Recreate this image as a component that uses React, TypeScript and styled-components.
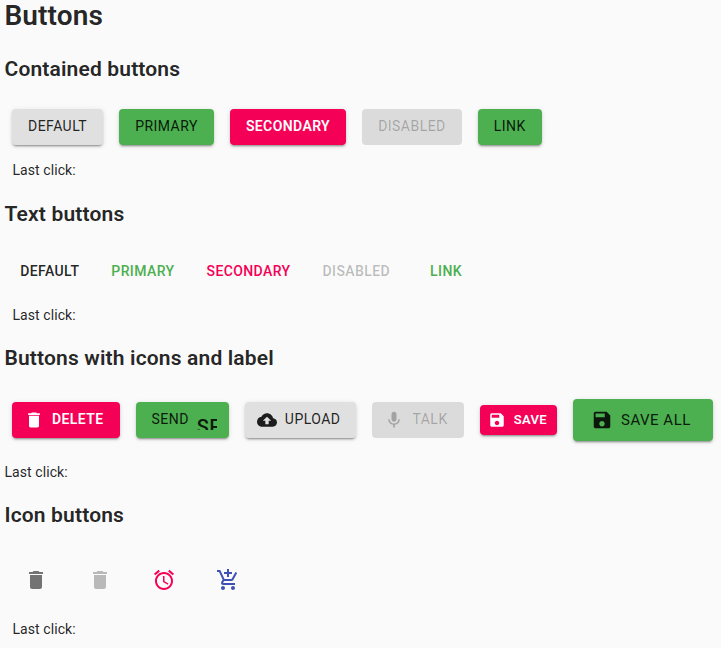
import React from "react";
import styled, { createGlobalStyle, css } from "styled-components";

const GlobalStyle = createGlobalStyle`
  *, *::before, *::after { box-sizing: border-box; }
  body {
    margin: 0;
    background: #fafafa;
    color: rgba(0, 0, 0, 0.87);
    font-family: Roboto, "Liberation Sans", sans-serif;
    font-size: 14px;
  }
`;

type Tone = "default" | "primary" | "secondary" | "disabled";
type Size = "small" | "medium" | "large";

const Page = styled.main`
  display: flex;
  flex-direction: column;
  height: 648px;
  padding-left: 4px;
  overflow: hidden;
`;

const Title = styled.h1`
  margin: 0;
  height: 54px;
  padding-left: 0.5px;
  font-size: 28px;
  font-weight: 600;
  letter-spacing: 0.1px;
  line-height: 32px;
`;

const Section = styled.section<{ $height: number }>`
  display: flex;
  flex-direction: column;
  flex: none;
  height: ${(p) => p.$height}px;
`;

const Heading = styled.h2`
  margin: 0 0 16px;
  padding-left: 0.5px;
  font-size: 21px;
  font-weight: 600;
  letter-spacing: 0.16px;
  line-height: 31px;
`;

const Row = styled.div<{ $height?: number }>`
  display: flex;
  align-items: center;
  gap: 16px;
  height: ${(p) => p.$height ?? 52}px;
  padding-left: 8px;
`;

const LastClick = styled.p<{ $inset?: boolean; $top?: number }>`
  margin: ${(p) => p.$top ?? 7}px 0 0 ${(p) => (p.$inset ? 8.5 : 0.5)}px;
  font-size: 14px;
  line-height: 20px;
  letter-spacing: 0.005em;
`;

const sizes = {
  small: css`
    padding: 4px 10px;
    font-size: 13px;
    line-height: 22px;
  `,
  medium: css`
    padding: 5px 16px 7px;
    font-size: 14px;
    line-height: 24px;
  `,
  large: css`
    padding: 8px 22px;
    font-size: 15px;
    line-height: 26px;
  `,
};

const fills: Record<Tone, [string, string]> = {
  default: ["#e0e0e0", "rgba(0, 0, 0, 0.87)"],
  primary: ["#4caf50", "rgba(0, 0, 0, 0.87)"],
  secondary: ["#f50057", "#fff"],
  disabled: ["rgba(0, 0, 0, 0.12)", "rgba(0, 0, 0, 0.26)"],
};

const textColors: Record<Tone, string> = {
  default: "rgba(0, 0, 0, 0.87)",
  primary: "#4caf50",
  secondary: "#f50057",
  disabled: "rgba(0, 0, 0, 0.26)",
};

const ButtonBase = styled.button`
  display: inline-flex;
  flex: none;
  align-items: center;
  justify-content: center;
  min-width: 64px;
  margin: 0;
  border: 0;
  border-radius: 4px;
  font-family: inherit;
  font-weight: 450;
  letter-spacing: 0.0335em;
  text-transform: uppercase;
  white-space: nowrap;
  cursor: pointer;
  &:disabled {
    cursor: default;
  }
`;

const ContainedButton = styled(ButtonBase)<{ $tone: Tone; $size?: Size }>`
  ${(p) => sizes[p.$size ?? "medium"]}
  background: ${(p) => fills[p.$tone][0]};
  color: ${(p) => fills[p.$tone][1]};
  ${(p) => p.$tone === "secondary" && "font-weight: 600; letter-spacing: 0.0285em;"}
  box-shadow: ${(p) =>
    p.$tone === "disabled"
      ? "none"
      : "0 3px 1px -2px rgba(0,0,0,0.2), 0 2px 2px 0 rgba(0,0,0,0.14), 0 1px 5px 0 rgba(0,0,0,0.12)"};
`;

const TextButton = styled(ButtonBase)<{ $tone: Tone }>`
  padding: 5px 7.75px 7px 8.25px;
  font-size: 14px;
  font-weight: 500;
  letter-spacing: 0.02857em;
  line-height: 24px;
  background: transparent;
  color: ${(p) => textColors[p.$tone]};
`;

const IconButton = styled.button<{ $color: string }>`
  display: flex;
  flex: none;
  padding: 12px;
  border: 0;
  border-radius: 50%;
  background: transparent;
  color: ${(p) => p.$color};
`;

const Svg = styled.svg<{ $size: number; $lead?: number; $drop?: number }>`
  flex: none;
  width: ${(p) => p.$size}px;
  height: ${(p) => p.$size}px;
  margin: ${(p) => p.$drop ?? 0}px ${(p) => (p.$lead ? 8 : 0)}px 0 ${(p) => p.$lead ?? 0}px;
  fill: currentColor;
`;

const LigatureIcon = styled.span`
  width: 20px;
  height: 20px;
  margin: 2px -4px 0 8px;
  overflow: hidden;
  font-size: 20px;
  font-weight: 500;
  line-height: 34px;
  letter-spacing: 0.4px;
  text-align: left;
`;

const paths = {
  trash: "M6 19c0 1.1.9 2 2 2h8c1.1 0 2-.9 2-2V7H6v12zM19 4h-3.5l-1-1h-5l-1 1H5v2h14V4z",
  upload:
    "M19.35 10.04C18.67 6.59 15.64 4 12 4 9.11 4 6.6 5.64 5.35 8.04 2.34 8.36 0 10.91 0 14c0 3.31 2.69 6 6 6h13c2.76 0 5-2.24 5-5 0-2.64-2.05-4.78-4.65-4.96zM14 13v4h-4v-4H7l5-5 5 5h-3z",
  mic: "M12 14c1.66 0 2.99-1.34 2.99-3L15 5c0-1.66-1.34-3-3-3S9 3.34 9 5v6c0 1.66 1.34 3 3 3zm5.3-3c0 3-2.54 5.1-5.3 5.1S6.7 14 6.7 11H5c0 3.41 2.72 6.23 6 6.72V21h2v-3.28c3.28-.48 6-3.3 6-6.72h-1.7z",
  save: "M17 3H5c-1.11 0-2 .9-2 2v14c0 1.1.89 2 2 2h14c1.1 0 2-.9 2-2V7l-4-4zm-5 16c-1.66 0-3-1.34-3-3s1.34-3 3-3 3 1.34 3 3-1.34 3-3 3zm3-10H5V5h10v4z",
  alarm:
    "M22 5.72l-4.6-3.86-1.29 1.53 4.6 3.86L22 5.72zM7.88 3.39L6.6 1.86 2 5.71l1.29 1.53 4.59-3.85zM12.5 8H11v6l4.75 2.85.75-1.23-4-2.37V8zM12 4c-4.97 0-9 4.03-9 9s4.02 9 9 9c4.97 0 9-4.03 9-9s-4.03-9-9-9zm0 16c-3.87 0-7-3.13-7-7s3.13-7 7-7 7 3.13 7 7-3.13 7-7 7z",
  cart: "M11 9h2V6h3V4h-3V1h-2v3H8v2h3v3zm-4 9c-1.1 0-1.99.9-1.99 2S5.9 22 7 22s2-.9 2-2-.9-2-2-2zm10 0c-1.1 0-1.99.9-1.99 2s.89 2 1.99 2 2-.9 2-2-.9-2-2-2zm-9.83-3.25l.03-.12.9-1.63h7.45c.75 0 1.41-.41 1.75-1.03l3.86-7.01L19.42 4h-.01l-1.1 2-2.76 5H8.53l-.13-.27L6.16 6l-.95-2-.94-2H1v2h2l3.6 7.59-1.35 2.45c-.16.28-.25.61-.25.96 0 1.1.9 2 2 2h12v-2H7.42c-.13 0-.25-.11-.25-.25z",
};

function Icon({ name, size = 20, lead }: { name: keyof typeof paths; size?: number; lead?: number }) {
  return (
    <Svg viewBox="0 0 24 24" $size={size} $lead={lead} $drop={size === 20 ? 2 : 0} aria-hidden="true">
      <path d={paths[name]} />
    </Svg>
  );
}

export default function App() {
  return (
    <>
      <GlobalStyle />
      <Page>
        <Title>Buttons</Title>
        <Section $height={145}>
          <Heading>Contained buttons</Heading>
          <Row>
            <ContainedButton $tone="default">Default</ContainedButton>
            <ContainedButton $tone="primary">Primary</ContainedButton>
            <ContainedButton $tone="secondary">Secondary</ContainedButton>
            <ContainedButton $tone="disabled" disabled>Disabled</ContainedButton>
            <ContainedButton $tone="primary">Link</ContainedButton>
          </Row>
          <LastClick $inset>Last click:</LastClick>
        </Section>
        <Section $height={144}>
          <Heading>Text buttons</Heading>
          <Row>
            <TextButton $tone="default">Default</TextButton>
            <TextButton $tone="primary">Primary</TextButton>
            <TextButton $tone="secondary">Secondary</TextButton>
            <TextButton $tone="disabled" disabled>Disabled</TextButton>
            <TextButton $tone="primary">Link</TextButton>
          </Row>
          <LastClick $inset>Last click:</LastClick>
        </Section>
        <Section $height={157}>
          <Heading>Buttons with icons and label</Heading>
          <Row $height={60}>
            <ContainedButton $tone="secondary"><Icon name="trash" lead={-4} />Delete</ContainedButton>
            <ContainedButton $tone="primary">Send<LigatureIcon aria-hidden="true">send</LigatureIcon></ContainedButton>
            <ContainedButton $tone="default"><Icon name="upload" lead={-4} />Upload</ContainedButton>
            <ContainedButton $tone="disabled" disabled><Icon name="mic" lead={-4} />Talk</ContainedButton>
            <ContainedButton $tone="secondary" $size="small"><Icon name="save" size={18} lead={-2} />Save</ContainedButton>
            <ContainedButton $tone="primary" $size="large"><Icon name="save" size={22} lead={-4} />Save all</ContainedButton>
          </Row>
          <LastClick $top={12}>Last click:</LastClick>
        </Section>
        <Section $height={148}>
          <Heading>Icon buttons</Heading>
          <Row $height={66}>
            <IconButton $color="rgba(0, 0, 0, 0.54)" aria-label="delete"><Icon name="trash" size={24} /></IconButton>
            <IconButton $color="rgba(0, 0, 0, 0.26)" aria-label="delete" disabled><Icon name="trash" size={24} /></IconButton>
            <IconButton $color="#f50057" aria-label="alarm"><Icon name="alarm" size={24} /></IconButton>
            <IconButton $color="#3f51b5" aria-label="add to shopping cart"><Icon name="cart" size={24} /></IconButton>
          </Row>
          <LastClick $inset $top={6}>Last click:</LastClick>
        </Section>
      </Page>
    </>
  );
}
